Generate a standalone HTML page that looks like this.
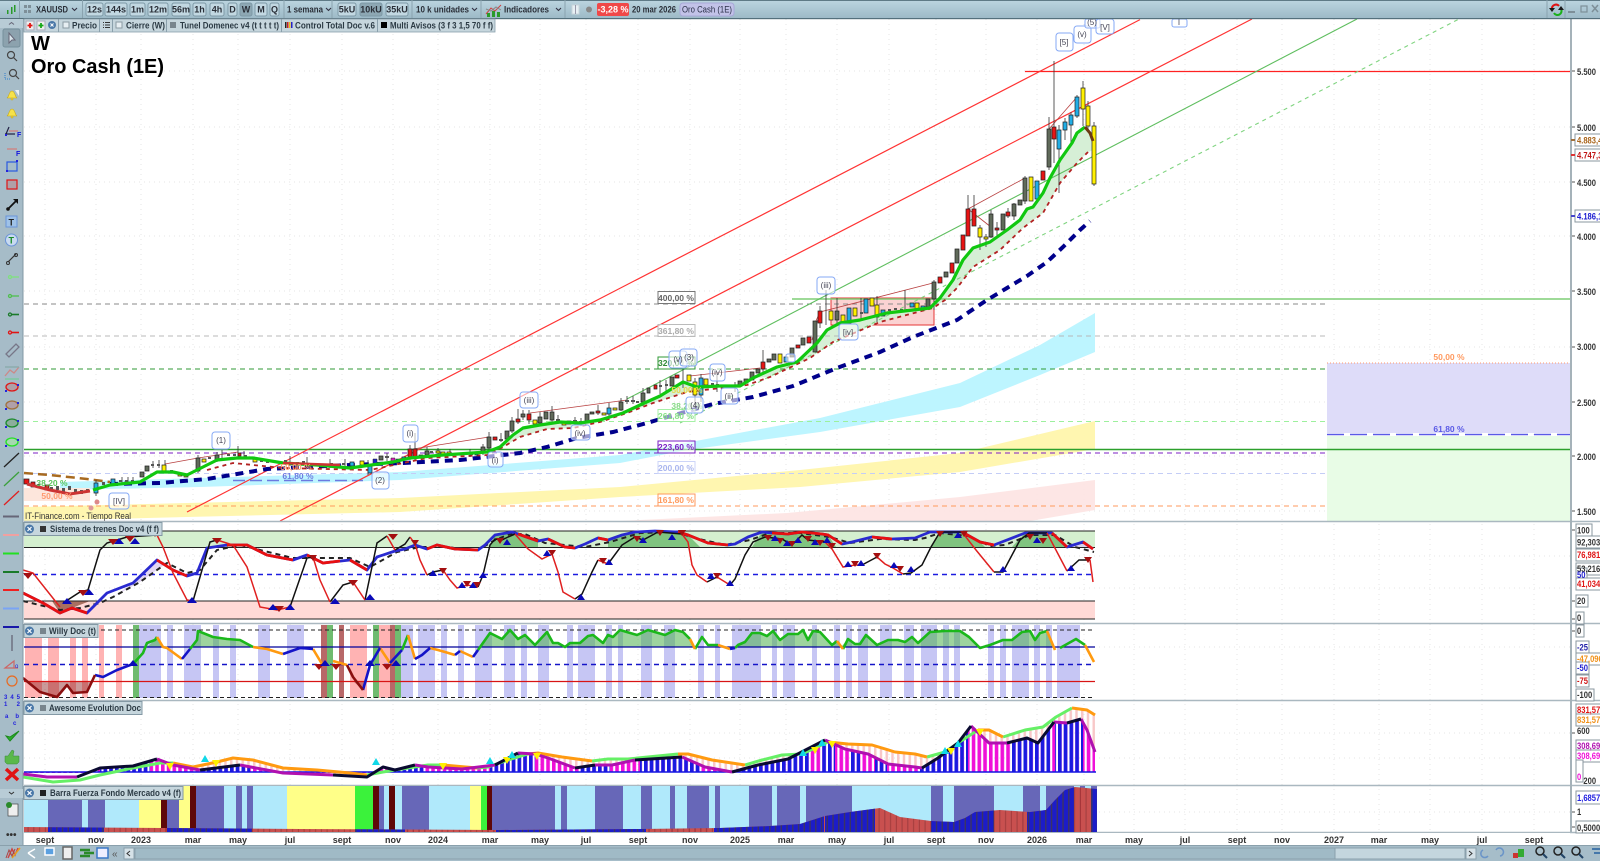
<!DOCTYPE html>
<html lang="es"><head><meta charset="utf-8"><title>XAUUSD Oro Cash</title>
<style>
html,body{margin:0;padding:0;width:1600px;height:861px;overflow:hidden;background:#fff}
svg{display:block}
text{font-family:"Liberation Sans",sans-serif}
.t{font-size:9px;font-weight:bold;fill:#2b3a44}
.l{font-size:9px;font-weight:bold;fill:#2a2f38}
.d{font-size:9px;font-weight:bold;fill:#333;text-anchor:middle}
.p{font-size:8.5px;font-weight:bold;text-anchor:middle}
.a{font-size:9.5px;font-weight:bold;fill:#333}
</style></head><body>
<svg width="1600" height="861" viewBox="0 0 1600 861" xmlns="http://www.w3.org/2000/svg">
<defs>
<linearGradient id="tb" x1="0" y1="0" x2="0" y2="1"><stop offset="0" stop-color="#bcd5e0"/><stop offset="1" stop-color="#9dbac7"/></linearGradient>
<pattern id="sb" patternUnits="userSpaceOnUse" width="5.75" height="10"><rect width="3.6" height="10" fill="#1a1ae0"/></pattern>
<pattern id="sm" patternUnits="userSpaceOnUse" width="5.75" height="10"><rect width="3.6" height="10" fill="#f010d8"/></pattern>
<pattern id="sp" patternUnits="userSpaceOnUse" width="5.75" height="10"><rect width="2.5" height="10" fill="#f8c8c8"/></pattern>
<pattern id="sr" patternUnits="userSpaceOnUse" width="5.75" height="10"><rect width="4.4" height="10" fill="#c9504f"/><rect x="4.4" width="1.3" height="10" fill="#a33"/></pattern>
<pattern id="sd" patternUnits="userSpaceOnUse" width="5.75" height="10"><rect width="4.4" height="10" fill="#1c1cc8"/><rect x="4.4" width="1.3" height="10" fill="#336"/></pattern>
<clipPath id="aw"><polygon points="24,772 24,774 47,777 77,777 100,768 133,766 157,759 173,765 200,770 240,765 283,773 333,775 367,777 383,767 395,770 415,765 428,767 462,769 495,765 518,753 535,754 548,758 575,768 595,765 612,765 635,760 682,757 705,767 732,772 758,765 788,759 825,740 845,749 868,754 888,764 915,767 922,768 938,758 958,743 971,726 989,743 1007,743 1027,738 1038,743 1054,722 1067,723 1081,719 1087,730 1095,752 1095,772"/></clipPath>
<clipPath id="awp"><polygon points="173,763 193,767 217,762 233,758 253,760 283,768 350,773 367,775 383,772 395,770 428,765 443,765 477,768 488,767 508,760 528,754 538,753 562,757 592,761 608,759 628,759 678,754 688,754 712,760 745,765 762,760 782,755 802,754 828,742 848,744 872,745 895,752 915,754 927,757 945,752 958,743 978,730 989,730 1003,737 1025,730 1043,727 1056,717 1072,708 1087,710 1095,715 1095,752 1087,730 1081,719 1067,723 1054,722 1038,743 1027,738 1007,743 989,743 971,726 958,743 938,758 922,768 915,767 888,764 868,754 845,749 825,740 788,759 758,765 732,772 705,767 682,757 635,760 612,765 595,765 575,768 548,758 535,754 518,753 495,765 462,769 428,767 415,765 395,770 383,767 367,777 333,775 283,773 240,765 200,770 173,765"/></clipPath>
<clipPath id="bb"><polygon points="24,827 300,829 500,830 640,829 720,828 770,826 800,824 825,816 850,812 880,808 900,817 931,821 954,822 965,818 975,812 1000,810 1030,812 1046,810 1055,800 1065,790 1075,787 1097,789 1097,832 24,832"/></clipPath>
</defs>

<rect width="1600" height="861" fill="#fff"/>

<!-- grid -->
<path fill="none" stroke="#e4e4e4" stroke-dasharray="1 4" d="M24 71H1570M24 127H1570M24 182H1570M24 236H1570M24 291H1570M24 347H1570M24 402H1570M24 456H1570M24 511H1570M24 556H1570M24 588H1570M24 647H1570M24 733H1570M24 758H1570M24 812H1570M45 19V832M96 19V832M141 19V832M193 19V832M238 19V832M290 19V832M342 19V832M393 19V832M438 19V832M490 19V832M540 19V832M586 19V832M638 19V832M690 19V832M740 19V832M786 19V832M837 19V832M889 19V832M936 19V832M986 19V832M1037 19V832M1084 19V832M1134 19V832M1185 19V832M1237 19V832M1282 19V832M1334 19V832M1379 19V832M1430 19V832M1482 19V832M1534 19V832"/>

<!-- price panel bands -->
<polygon fill="#fde3e2" opacity=".9" points="620,521 787,513 960,497 1095,480 1095,510 1030,521"/>
<polygon fill="#fff6b0" points="24,507 187,503 400,498 620,487 800,470 960,453 1095,421 1095,449 960,472 800,487 620,497 400,512 187,517 24,521"/>
<polygon fill="#bdf5ff" points="60,482 200,478 400,472 620,455 820,418 960,383 1040,345 1095,313 1095,352 1040,375 960,407 820,432 687,450 620,463 400,480 200,487 60,490"/>
<rect x="24" y="488" width="66" height="13" fill="#fde6dc"/>
<rect x="1327" y="363" width="243" height="70" fill="#dedcf9"/>
<rect x="1327" y="436" width="243" height="85" fill="#e8fce6"/>
<rect x="831" y="298" width="103" height="27" fill="#fbd2d2" stroke="#e53535"/>
<polygon fill="#d6efd6" points="487,452 500,447 513,435 523,428 540,425 560,422 580,423 600,420 623,413 640,405 660,396 683,382 697,387 720,386 740,386 753,378 750,382 687,392 653,403 627,413 600,422 573,428 547,429 520,437 503,447"/>
<polygon fill="#d6efd6" points="750,378 777,367 797,362 817,343 827,330 840,323 860,320 887,313 913,310 930,308 940,298 953,280 963,260 973,248 990,242 1007,230 1020,220 1027,209 1033,207 1043,193 1050,178 1060,160 1072,143 1077,133 1085,127 1090,133 1094,150 1088,152 1077,163 1060,183 1043,213 1023,228 1000,250 973,267 957,288 945,300 933,308 880,322 833,342 810,358 770,377"/>

<!-- levels -->
<g fill="none" stroke-width="1">
<path d="M24 304H1325" stroke="#8a8a8a" stroke-dasharray="5 4"/>
<path d="M24 336H1325" stroke="#b8b8b8" stroke-dasharray="5 4"/>
<path d="M24 369H1325" stroke="#2f9a35" stroke-dasharray="5 4"/>
<path d="M24 421.500H1325" stroke="#9df09d" stroke-dasharray="5 4"/>
<path d="M24 453H1325" stroke="#7b1fc4" stroke-dasharray="5 4"/>
<path d="M24 473.500H1325" stroke="#c4cdf6" stroke-dasharray="5 4"/>
<path d="M24 506H1325" stroke="#ff9a5c" stroke-dasharray="5 4"/>
<path d="M1327 363H1570" stroke="#ff9a70" stroke-dasharray="1 2"/>
<path d="M1327 434.500H1570" stroke="#5a5ae6" stroke-width="1.500" stroke-dasharray="17 6"/>
<path d="M233 480.500H363" stroke="#6c7ae0" stroke-width="1.500" stroke-dasharray="12 5"/>
<path d="M24 449.500H1570" stroke="#2ca02c" stroke-width="1.500"/>
<path d="M792 299H1570" stroke="#7fce77" stroke-width="1.500"/>
<path d="M1025 71.500H1570" stroke="#f22" stroke-width="1.200"/>
<path d="M187 512L1140 19.600" stroke="#f33" stroke-width="1.200"/>
<path d="M280 521L1252 19" stroke="#f33" stroke-width="1.200"/>
<path d="M627 399L1357 19" stroke="#5fbe5f" stroke-width="1.100"/>
<path d="M680 423L1459 19" stroke="#7fd47f" stroke-width="1.100" stroke-dasharray="4 4"/>
<path d="M815 323L820 312L933 283M690 376L760 368M165 464L198 458L238 452M968 209L991 227M968 209L1025 178M1049 129L1077 97M812 340L820 312M413 449L489 437M530 413L627 400" stroke="#b84040" stroke-width=".8"/>
</g>

<!-- MA lines -->
<polyline fill="none" stroke="#a86a20" stroke-width="2.500" stroke-dasharray="9 5" points="24,473 50,475 87,479 110,482"/>
<polyline fill="none" stroke="#00008b" stroke-width="4" stroke-dasharray="8 6" points="110,484 160,483 207,479 267,469 306,467 350,465 403,463 460,460 520,453 547,447 577,438 613,432 647,423 657,420 713,404 753,397 793,386 837,368 880,352 913,337 957,320 987,300 1007,288 1027,276 1047,262 1063,247 1080,230 1090,221"/>
<polyline fill="none" stroke="#b22222" stroke-width="1.800" stroke-dasharray="4 4" points="207,470 233,463 283,468 370,470 427,458 487,455 503,447 520,437 547,429 573,428 600,422 627,413 653,403 687,392 747,385 770,377 810,358 833,342 880,322 933,308 945,300 957,288 973,267 1000,250 1023,228 1043,213 1060,183 1077,163 1088,152"/>

<!-- candles: wicks -->
<path fill="none" stroke="#333" stroke-width=".8" d="M96 480V496M122 477V484M128 477V484M133 477V484M153 461V468M159 460V468M165 460V472M198 455V473M217 452V462M222 450V460M238 446V458M244 451V459M290 456V466M307 457V467M330 459V468M345 459V468M368 460V475M387 453V461M410 445V460M415 433V460M427 447V457M438 448V455M450 449V456M470 449V457M483 444V455M489 432V450M501 433V442M512 417V433M518 409V424M523 410V420M529 410V424M540 412V426M552 406V422M558 415V424M575 417V425M581 418V426M598 405V415M609 403V416M621 398V411M627 396V404M633 396V404M643 388V406M660 380V394M666 380V394M683 368V388M695 378V410M701 374V402M717 372V392M735 382V392M763 350V372M820 306V328M826 290V325M837 298V325M861 298V320M877 296V322M905 290V312M934 280V310M968 195V236M974 195V226M980 225V250M986 234V247M991 210V238M997 222V236M1008 208V218M1014 203V220M1025 176V204M1049 117V170M1054 61V163M1059 125V193M1065 118V140M1071 112V145M1077 95V118M1083 81V126M1088 101V130M1094 122V186"/>

<!-- candle bodies -->
<path fill="#606a5a" stroke="#222" stroke-width=".7" d="M379 456h4v4h-4zM419 455h4v3h-4zM425 451h4v4h-4zM481 447h4v6h-4zM487 437h4v11h-4zM505 431h4v8h-4zM510 421h4v10h-4zM521 414h4v3h-4zM538 417h4v6h-4zM544 412h4v7h-4zM550 412h4v8h-4zM585 414h4v7h-4zM590 412h4v2h-4zM619 402h4v8h-4zM641 393h4v9h-4zM647 388h3v5h-3zM670 377h4v9h-4zM738 381h4v5h-4zM744 379h4v4h-4zM750 372h4v8h-4zM756 369h4v4h-4zM767 359h4v3h-4zM772 354h4v6h-4zM790 348h4v9h-4zM801 338h4v7h-4zM813 321h4v31h-4zM835 311h4v9h-4zM926 299h4v8h-4zM932 282h4v17h-4zM944 272h4v5h-4zM955 249h4v14h-4zM989 214h4v23h-4zM1001 214h4v16h-4zM1012 204h4v12h-4zM1018 200h4v5h-4zM1023 178h4v23h-4zM1047 129h4v38h-4zM196 458h4v13h-4zM140 472h4v5h-4zM145 466h4v5h-4zM215 455h4v5h-4z"/>
<path fill="#fff000" stroke="#222" stroke-width=".7" d="M162 465h4v7h-4zM178 473h4v3h-4zM184 474h4v3h-4zM202 459h4v3h-4zM253 459h4v3h-4zM436 451h4v2h-4zM441 452h4v2h-4zM447 452h4v2h-4zM533 420h4v4h-4zM562 422h4v3h-4zM602 413h4v2h-4zM613 408h4v2h-4zM687 375h4v6h-4zM693 382h4v13h-4zM704 379h4v6h-4zM778 354h4v9h-4zM829 311h4v9h-4zM841 315h4v8h-4zM853 308h4v8h-4zM870 298h4v8h-4zM875 305h4v12h-4zM915 303h4v7h-4zM978 228h4v9h-4zM984 237h4v2h-4zM1029 177h4v24h-4zM1081 88h4v21h-4zM1086 106h4v20h-4zM1092 126h4v58h-4zM360 461h4v4h-4z"/>
<path fill="#22aee6" stroke="#222" stroke-width=".7" d="M94 483h4v10h-4zM111 479h4v5h-4zM321 464h4v3h-4zM350 462h4v4h-4zM368 465h4v8h-4zM402 457h4v2h-4zM475 453h3v2h-3zM567 421h4v3h-4zM607 408h4v6h-4zM699 378h4v17h-4zM784 357h4v5h-4zM847 308h4v15h-4zM864 299h4v14h-4zM881 310h4v6h-4zM910 303h4v4h-4zM921 306h4v4h-4zM1035 181h4v18h-4zM1057 130h4v19h-4zM1063 122h4v8h-4zM1069 115h4v10h-4zM1075 97h4v19h-4z"/>
<path fill="#1c1cc8" stroke="#222" stroke-width=".5" d="M373 459h4v6h-4zM396 459h4v4h-4z"/>
<path fill="#d820b8" stroke="#222" stroke-width=".5" d="M391 458h4v5h-4z"/>
<path fill="#e81414" stroke="#222" stroke-width=".7" d="M24 479h5v5h-5zM31 482h4v5h-4zM45 485h4v5h-4zM238 453h3v3h-3zM408 449h4v8h-4zM413 449h4v8h-4zM493 437h4v3h-4zM516 419h4v3h-4zM527 414h4v6h-4zM596 411h4v2h-4zM654 385h3v4h-3zM675 375h4v3h-4zM761 362h4v7h-4zM796 345h4v3h-4zM807 337h4v6h-4zM818 311h4v12h-4zM938 277h4v6h-4zM950 263h4v10h-4zM961 235h4v15h-4zM966 209h4v27h-4zM972 209h4v17h-4zM995 228h4v2h-4zM1006 212h4v4h-4zM1041 171h4v9h-4zM1052 127h4v12h-4z"/>
<path fill="#555" d="M37 484h3v4h-3zM50 487h3v4h-3zM56 486h3v4h-3zM62 488h3v4h-3zM68 486h3v4h-3zM74 489h3v4h-3zM80 490h3v4h-3zM86 489h3v3h-3zM102 482h3v3h-3zM119 480h3v2h-3zM125 480h3v2h-3zM131 480h3v2h-3zM151 464h3v2h-3zM157 464h3v2h-3zM170 470h3v2h-3zM208 457h3v2h-3zM227 454h3v2h-3zM233 454h3v2h-3zM244 455h3v2h-3zM260 460h3v2h-3zM266 461h3v2h-3zM272 460h3v2h-3zM278 461h3v2h-3zM284 460h3v2h-3zM296 462h3v2h-3zM302 461h3v2h-3zM312 463h3v2h-3zM330 463h3v2h-3zM336 464h3v2h-3zM342 463h3v2h-3zM385 456h4v2h-4zM430 451h3v2h-3zM453 453h3v2h-3zM458 453h3v2h-3zM464 453h3v2h-3zM470 453h3v2h-3zM499 439h4v2h-4zM556 419h4v2h-4zM573 420h4v2h-4zM579 421h4v2h-4zM625 400h4v2h-4zM631 400h4v2h-4zM636 401h3v2h-3zM659 385h3v2h-3zM665 384h3v2h-3zM711 383h3v2h-3zM716 384h3v2h-3zM722 385h3v2h-3zM728 385h3v2h-3zM734 385h3v2h-3zM860 312h3v2h-3zM888 309h3v2h-3zM894 308h3v2h-3zM900 309h3v2h-3zM906 309h3v2h-3z"/>

<polyline fill="none" stroke="#10c810" stroke-width="3.200" stroke-linejoin="round" points="93,490 110,485 140,482 157,472 173,472 187,475 197,470 217,460 237,458 253,458 283,463 317,465 350,468 393,462 410,458 443,455 487,452 500,447 513,435 523,428 540,425 560,422 580,423 600,420 623,413 640,405 660,396 683,382 697,387 720,386 740,386 753,378 777,367 797,362 817,343 827,330 840,323 860,320 887,313 913,310 930,308 940,298 953,280 963,260 973,248 990,242 1007,230 1020,220 1027,209 1033,207 1043,193 1050,178 1060,160 1072,143 1077,133 1085,127"/>
<polyline fill="none" stroke="#6b3a12" stroke-width="3" points="1085,127 1090,133 1093,141"/>
<polyline fill="none" stroke="#c33" stroke-width="3" points="27,484 50,490 70,494 90,491"/>
<polyline fill="none" stroke="#c33" stroke-width="2.500" points="283,463 310,464 340,465"/>

<!-- pct labels -->
<g fill="#fff" fill-opacity=".55">
<rect x="658" y="291.500" width="37" height="12" stroke="#777"/>
<rect x="658" y="324.500" width="37" height="12" stroke="#bbb"/>
<rect x="658" y="357" width="37" height="12" stroke="#2f9a35"/>
<rect x="658" y="409.500" width="37" height="12" stroke="#a6f0a6"/>
<rect x="658" y="441" width="37" height="12" stroke="#7b1fc4"/>
<rect x="658" y="461.500" width="37" height="12" stroke="#cdd5f8"/>
<rect x="658" y="494" width="37" height="12" stroke="#ff9a5c"/>
</g>
<text class="p" x="676" y="301" fill="#666">400,00 %</text>
<text class="p" x="676" y="334" fill="#aaa">361,80 %</text>
<text class="p" x="676" y="366" fill="#2f8a35">320,00 %</text>
<text class="p" x="676" y="419" fill="#85e085">261,80 %</text>
<text class="p" x="676" y="450" fill="#7b1fc4">223,60 %</text>
<text class="p" x="676" y="471" fill="#aab6ee">200,00 %</text>
<text class="p" x="676" y="503" fill="#ff9a5c">161,80 %</text>
<text class="p" x="687" y="409" fill="#86d986">38,20 %</text>
<text class="p" x="687" y="393" fill="#e8d94a">50,00 %</text>
<text class="p" x="1449" y="360" fill="#ff9a60">50,00 %</text>
<text class="p" x="1449" y="432" fill="#5a5ae6">61,80 %</text>
<text class="p" x="298" y="479" fill="#6c7ae0">61,80 %</text>
<text class="p" x="296" y="470" fill="#ffa070">50,00 %</text>
<text class="p" x="52" y="486" fill="#5cc45c">38,20 %</text>
<text class="p" x="57" y="499" fill="#ff9a70">50,00 %</text>

<!-- elliott labels -->
<g fill="#fff" fill-opacity=".6" stroke="#86a9f5">
<rect x="1056" y="33" width="17" height="18" rx="3"/><rect x="1074" y="26" width="17" height="17" rx="3"/><rect x="1085" y="19" width="15" height="9" rx="2"/><rect x="1096" y="19" width="18" height="15" rx="3"/><rect x="1172" y="19" width="15" height="8" rx="2"/>
<rect x="212" y="432" width="18" height="17" rx="3"/><rect x="403" y="425" width="15" height="17" rx="3"/><rect x="520" y="392" width="18" height="16" rx="3"/><rect x="817" y="277" width="18" height="17" rx="3"/><rect x="372" y="472" width="17" height="17" rx="3"/><rect x="109" y="493" width="20" height="16" rx="3"/><rect x="571" y="425" width="19" height="15" rx="3"/><rect x="669" y="351" width="18" height="17" rx="3"/><rect x="680" y="349" width="17" height="17" rx="3"/><rect x="710" y="364" width="15" height="17" rx="3"/><rect x="686" y="397" width="17" height="16" rx="3"/><rect x="721" y="388" width="17" height="16" rx="3"/><rect x="786" y="354" width="9" height="8" rx="2"/><rect x="839" y="324" width="19" height="16" rx="3"/><rect x="488" y="452" width="15" height="15" rx="3"/>
</g>
<g text-anchor="middle" font-size="8" fill="#445">
<text x="1064" y="45">[5]</text><text x="1082" y="37">(v)</text><text x="1092" y="25">(5)</text><text x="1105" y="30">[V]</text><text x="1179" y="25">I</text>
<text x="221" y="443">(1)</text><text x="410" y="436">(i)</text><text x="529" y="403">(iii)</text><text x="826" y="288">(iii)</text><text x="380" y="483">(2)</text><text x="119" y="504">[IV]</text><text x="580" y="436">(iv)</text><text x="678" y="362">(v)</text><text x="689" y="360">(3)</text><text x="717" y="375">(iv)</text><text x="695" y="408">(4)</text><text x="729" y="399">(ii)</text><text x="848" y="335">[iv]</text><text x="495" y="463">(i)</text>
</g>
<text x="25" y="519" font-size="9" fill="#333" textLength="106" lengthAdjust="spacingAndGlyphs">IT-Finance.com - Tiempo Real</text>
<circle cx="97" cy="502" r="2.500" fill="#d88"/><circle cx="91" cy="508" r="2.500" fill="#d99"/>

<text x="31" y="50" font-size="20" font-weight="bold" fill="#000">W</text>
<text x="31" y="73" font-size="20" font-weight="bold" fill="#000" textLength="133" lengthAdjust="spacingAndGlyphs">Oro Cash (1E)</text>

<!-- separators -->
<path d="M24 521.500H1600M24 623.500H1600M24 700.500H1600M24 785.500H1600M24 832.500H1600" stroke="#aab8c0" stroke-width="1.500"/>

<!-- TRENES -->
<rect x="24" y="531" width="1071" height="17" fill="#d4efcf"/>
<rect x="24" y="601" width="1071" height="18" fill="#ffd9d6"/>
<g fill="#80c480">
<polygon points="490,547 495,535 512,532 518,534 538,541 538,547"/>
<polygon points="608,547 608,540 622,535 635,532 655,531 678,532 688,535 700,547"/>
<polygon points="752,547 762,532 772,533 788,534 802,532 822,534 828,535 836,547"/>
<polygon points="931,547 940,532 962,532 980,542 985,547"/>
<polygon points="1012,547 1025,533 1052,533 1065,547"/>
</g>
<polygon fill="#a87060" points="52,601 90,601 72,608 60,613"/>
<polygon fill="#dccdf0" opacity=".8" points="113,597 133,583 157,560 167,563 140,582"/>
<polygon fill="#dccdf0" opacity=".8" points="1067,547 1083,542 1093,549 1075,547"/>
<path fill="none" stroke="#222" d="M24 531H1095M24 547.500H1095M24 601H1095M24 619H1095"/>
<path fill="none" stroke="#1c1ce0" stroke-width="1.500" stroke-dasharray="5 4" d="M24 574.500H1095"/>
<polyline fill="none" stroke="#222" stroke-width="2" stroke-dasharray="5 4" points="23,601 60,610 80,608 100,603 113,597 140,582 167,563 187,573 200,570 217,550 240,545 260,550 293,558 350,558 370,567 397,552 420,547 445,547 478,550 495,540 510,534 525,534 545,543 565,545 585,547 610,542 640,533 675,532 695,538 725,545 750,540 770,533 800,533 830,537 850,543 880,539 915,540 925,538 940,533 968,536 990,546 1005,545 1030,535 1055,535 1075,547 1094,552"/>
<polyline fill="none" stroke="#2a2ad0" stroke-width="2.800" stroke-linejoin="round" points="23,593 43,603 60,613 72,608 87,613 107,593 133,583 157,560 173,570 187,576 197,573 207,548 227,545 247,545 267,555 293,560 307,555 323,563 350,560 367,570 377,557 395,551 405,549 415,545 427,549 437,545 455,549 478,550 485,545 495,535 512,532 518,534 538,541 548,539 565,547 575,548 585,544 598,538 608,540 622,535 635,532 655,531 678,532 688,535 708,543 728,545 735,544 748,537 762,532 772,533 788,534 802,532 822,534 828,535 842,544 852,542 872,537 892,539 915,538 930,532 962,532 980,542 994,545 1025,533 1052,533 1067,547 1083,542 1093,549"/>
<g fill="none" stroke="#e81010" stroke-width="2.800">
<polyline points="23,593 43,603 60,613 72,608 87,613"/><polyline points="157,560 173,570 187,576"/><polyline points="227,545 247,545 267,555 293,560"/><polyline points="307,555 323,563 340,561"/><polyline points="350,560 367,570"/><polyline points="427,549 437,545 455,549 478,550"/><polyline points="518,534 538,541"/><polyline points="548,539 565,547 575,548"/><polyline points="598,538 608,540"/><polyline points="678,532 688,535 708,543 728,545"/><polyline points="772,533 788,534 802,532 822,534 828,535 842,544"/><polyline points="872,537 892,539"/><polyline points="962,532 980,542 994,545"/><polyline points="1052,533 1067,547"/><polyline points="1083,542 1093,549"/>
</g>
<g fill="none" stroke="#111" stroke-width="1.500">
<polyline points="63,603 80,592 88,590 100,550 107,543 127,537 157,535"/>
<polyline points="193,601 200,577 210,542 217,540"/>
<polyline points="290,607 307,558 313,557"/>
<polyline points="330,602 343,585 353,582"/>
<polyline points="365,600 377,543 387,536"/>
<polyline points="395,550 405,544 410,537"/>
<polyline points="427,575 433,572 443,570"/>
<polyline points="478,587 483,575 490,545 495,539 502,540 508,537 515,534"/>
<polyline points="575,599 582,594 592,572 598,560"/>
<polyline points="608,564 622,545 635,537 643,540 658,532 682,534"/>
<polyline points="707,582 717,577"/>
<polyline points="730,585 735,579 745,555 753,542 765,537 782,539 792,545 802,535 808,540 825,542"/>
<polyline points="862,565 877,557"/>
<polyline points="903,574 911,573 922,565 931,547 940,532 962,532"/>
<polyline points="994,572 1003,572 1020,540 1029,533 1047,533"/>
<polyline points="1067,571 1079,560 1090,560"/>
</g>
<g fill="none" stroke="#e02020" stroke-width="1.500">
<polyline points="23,570 33,573 60,607"/><polyline points="157,535 163,547 173,573 187,600 193,601"/><polyline points="217,540 233,545 247,567 260,607 277,610 290,607"/><polyline points="313,557 320,580 330,602"/><polyline points="353,582 365,600"/><polyline points="387,536 395,550"/><polyline points="410,537 415,544 420,560 427,575"/><polyline points="443,570 450,580 457,588 467,585 478,587"/><polyline points="515,534 528,549 542,559 552,554 558,572 563,592 575,599"/><polyline points="598,560 608,564"/><polyline points="682,534 688,542 692,565 697,575 707,582"/><polyline points="717,577 730,585"/><polyline points="825,542 832,549 843,567 855,565 862,565"/><polyline points="877,557 885,564 893,568 903,574"/><polyline points="962,532 976,550 994,572"/><polyline points="1047,533 1067,571"/><polyline points="1090,560 1093,582"/>
</g>
<path fill="#a40f10" d="M28 579l-5-6h10zM83 596l-5-6h10zM113 545l-5-6h10zM130 542l-5-6h10zM155 537l-4-6h8zM217 544l-5-6h10zM279 612l-5-6h10zM313 561l-4-6h8zM353 586l-5-6h10zM393 540l-5-6h10zM415 546l-4-6h8zM443 574l-4-6h8zM467 587l-4-6h8zM477 588l-4-6h8zM500 544l-4-6h8zM552 556l-4-6h8zM603 564l-4-6h8zM637 542l-4-6h8zM660 536l-4-6h8zM682 536l-4-6h8zM717 579l-4-6h8zM768 541l-4-6h8zM780 544l-4-6h8zM792 547l-4-6h8zM808 542l-4-6h8zM820 546l-4-6h8zM832 549l-4-6h8zM855 567l-4-6h8zM877 559l-4-6h8zM900 572l-4-6h8zM940 537l-4-6h8zM964 537l-4-6h8zM1030 540l-4-6h8zM1043 544l-4-6h8zM1088 563l-4-6h8z"/>
<path fill="#0a0ab8" d="M67 598l-5 6h10zM89 589l-5 6h10zM119 538l-5 6h10zM135 538l-5 6h10zM192 597l-5 6h10zM273 604l-5 6h10zM290 604l-5 6h10zM335 598l-5 6h10zM370 594l-5 6h10zM433 570l-4 6h8zM462 582l-4 6h8zM473 582l-4 6h8zM483 572l-4 6h8zM507 539l-4 6h8zM547 550l-4 6h8zM581 594l-4 6h8zM609 559l-4 6h8zM643 537l-4 6h8zM672 534l-4 6h8zM711 573l-4 6h8zM730 580l-4 6h8zM775 535l-4 6h8zM787 540l-4 6h8zM798 537l-4 6h8zM815 539l-4 6h8zM827 537l-4 6h8zM848 561l-4 6h8zM861 560l-4 6h8zM894 562l-4 6h8zM911 566l-4 6h8zM958 532l-4 6h8zM1003 566l-4 6h8zM1037 537l-4 6h8zM1071 565l-4 6h8z"/>

<!-- WILLY -->
<g fill="#c6c6f4">
<path d="M139 625h22v73h-22zM167 625h6v73h-6zM184 625h17v73h-17zM213 625h6v73h-6zM230 625h6v73h-6zM258 625h12v73h-12zM287 625h17v73h-17zM401 625h12v73h-12zM418 625h17v73h-17zM441 625h6v73h-6zM458 625h6v73h-6zM475 625h17v73h-17zM504 625h11v73h-11zM521 625h6v73h-6zM538 625h11v73h-11zM567 625h6v73h-6zM578 625h17v73h-17zM606 625h6v73h-6zM618 625h5v73h-5zM641 625h11v73h-11zM664 625h11v73h-11zM698 625h6v73h-6zM715 625h5v73h-5zM732 625h29v73h-29zM772 625h5v73h-5zM783 625h12v73h-12zM812 625h5v73h-5zM834 625h6v73h-6zM846 625h6v73h-6zM858 625h10v73h-10zM880 625h12v73h-12zM904 625h10v73h-10zM921 625h16v73h-16zM943 625h6v73h-6zM954 625h6v73h-6zM988 625h6v73h-6zM1000 625h6v73h-6zM1012 625h17v73h-17zM1034 625h6v73h-6zM1046 625h6v73h-6zM1057 625h23v73h-23z"/>
</g>
<path fill="#ffb3b3" d="M25 625h17v73H25zM48 625h11v73H48zM70 625h6v73h-6zM82 625h6v73h-6zM99 625h5v73h-5zM116 625h6v73h-6zM350 625h17v73h-17zM379 625h11v73h-11z"/>
<path fill="#6fbb6f" d="M133 625h6v73h-6zM327 625h6v73h-6zM373 625h6v73h-6zM395 625h6v73h-6z"/>
<path fill="#b86868" d="M321 625h6v73h-6zM339 625h5v73h-5zM390 625h5v73h-5z"/>
<polygon fill="#4fb04f" opacity=".55" points="147,647 155,640 157,637 163,647 190,647 197,640 198,631 213,637 227,639 240,640 253,647 480,647 490,633 502,639 510,630 518,639 525,635 535,645 547,632 553,643 558,643 565,647 570,643 580,643 588,636 593,635 603,643 608,635 613,637 620,630 637,635 648,630 665,635 675,630 683,632 690,639 694,647 738,647 745,642 752,633 760,633 767,636 773,631 780,640 788,634 798,634 803,630 808,640 813,631 820,632 832,645 837,641 841,647 848,639 855,644 860,644 866,635 877,645 888,640 898,640 905,642 912,637 918,643 930,632 945,631 960,631 969,637 978,647 1003,647 1003,640 1012,640 1022,632 1030,631 1035,640 1040,633 1047,631 1053,647"/>
<polygon fill="#8a2020" opacity=".45" points="24,678 40,692 57,697 67,685 73,693 87,692 92,681 24,681"/>
<polygon fill="#8a2020" opacity=".45" points="353,681 363,690 367,681"/>
<path fill="none" stroke="#222" stroke-dasharray="4 3" d="M24 630H1095M24 697.500H1095"/>
<path fill="none" stroke="#00009a" stroke-width="1.300" d="M24 647H1095"/>
<path fill="none" stroke="#1414c8" stroke-width="1.500" stroke-dasharray="5 4" d="M24 664.500H1095"/>
<path fill="none" stroke="#d81414" stroke-width="1.300" d="M24 681.500H1095"/>
<g fill="none" stroke-width="2.600" stroke-linejoin="round">
<g stroke="#1bb81b">
<polyline points="478,650 490,633 502,639 510,630 518,639 525,635 535,645 547,632 553,643 558,643 565,647 570,643 580,643 588,636 593,635 603,643 608,635 613,637 620,630 637,635 648,630 665,635 675,630 683,632 690,639"/>
<polyline points="695,649 702,637 708,645 718,645"/>
<polyline points="735,648 738,645 745,642 752,633 760,633 767,636 773,631 780,640 788,634 798,634 803,630 808,640 813,631 820,632 832,645 837,641"/>
<polyline points="843,649 848,639 855,644 860,644 866,635 877,645 888,640 898,640 905,642 912,637 918,643 930,632 945,631 960,631 969,637 980,648 990,645 1003,640 1012,640 1022,632 1030,631 1035,640 1040,633 1047,631"/>
<polyline points="402,650 408,635"/>
<polyline points="133,664 143,653 147,643 155,640 157,637"/>
<polyline points="190,649 197,640 198,631 213,637 227,639 240,640 253,647"/>
<polyline points="1060,648 1076,639 1085,645"/>
</g>
<g stroke="#ff9a10">
<polyline points="157,637 163,647 167,648 182,659"/>
<polyline points="253,647 267,649 283,654"/>
<polyline points="313,649 322,664"/><polyline points="333,661 347,665"/>
<polyline points="380,648 390,663"/>
<polyline points="408,635 415,659"/>
<polyline points="430,648 438,650 445,652 455,655"/>
<polyline points="460,651 473,657"/>
<polyline points="690,639 695,649"/>
<polyline points="718,645 730,649"/>
<polyline points="837,641 843,649"/>
<polyline points="1047,631 1055,650"/>
<polyline points="1085,645 1094,662"/>
</g>
<g stroke="#1414c8">
<polyline points="95,675 103,677 117,670 133,664"/>
<polyline points="182,659 190,649"/>
<polyline points="283,654 300,648 313,649"/>
<polyline points="363,690 370,665 380,648"/>
<polyline points="390,663 402,650"/>
<polyline points="415,659 422,655 430,648"/>
<polyline points="455,655 460,651"/>
<polyline points="473,657 478,650"/>
<polyline points="730,649 735,648"/>
</g>
<g stroke="#8b0f0f">
<polyline points="23,678 40,692 57,697 67,685 73,693 87,692 95,675"/>
<polyline points="347,665 353,677 363,690"/>
</g>
</g>
<path fill="#a40f10" d="M319 670l-5-6h10zM336 670l-5-6h10zM387 670l-5-6h10z"/>
<path fill="#0a0ab8" d="M325 660l-5 6h10zM133 660l-5 6h10zM370 660l-5 6h10zM396 660l-5 6h10z"/>

<!-- AWESOME -->
<g clip-path="url(#awp)"><rect x="24" y="701" width="1072" height="80" fill="url(#sp)"/></g>
<g clip-path="url(#aw)">
<rect x="24" y="701" width="1072" height="72" fill="url(#sm)"/>
<rect x="100" y="701" width="50" height="72" fill="url(#sb)"/><rect x="200" y="701" width="50" height="72" fill="url(#sb)"/><rect x="395" y="701" width="30" height="72" fill="url(#sb)"/><rect x="490" y="701" width="45" height="72" fill="url(#sb)"/><rect x="580" y="701" width="30" height="72" fill="url(#sb)"/><rect x="640" y="701" width="60" height="72" fill="url(#sb)"/><rect x="735" y="701" width="75" height="72" fill="url(#sb)"/><rect x="822" y="701" width="13" height="72" fill="url(#sb)"/><rect x="850" y="701" width="10" height="72" fill="url(#sb)"/><rect x="875" y="701" width="12" height="72" fill="url(#sb)"/><rect x="920" y="701" width="48" height="72" fill="url(#sb)"/><rect x="1010" y="701" width="40" height="72" fill="url(#sb)"/><rect x="1055" y="701" width="28" height="72" fill="url(#sb)"/>
</g>
<path d="M24 772H1096" stroke="#1414e0" stroke-width="1.500"/>
<g fill="none" stroke-width="3" stroke-linejoin="round">
<g stroke="#66f066">
<polyline points="23,777 53,782 80,780 100,775 133,768 160,763 173,763"/>
<polyline points="367,775 383,772 395,770 428,765 443,765"/>
<polyline points="477,768 488,767 508,760 528,754"/>
<polyline points="592,761 608,759 628,759 678,754"/>
<polyline points="745,765 762,760 782,755 802,754 828,742"/>
<polyline points="927,757 945,752 958,743 978,730"/>
<polyline points="1003,737 1025,730 1043,727 1056,717 1072,708"/>
</g>
<g stroke="#ff9a10">
<polyline points="173,763 193,767 217,762 233,758 253,760 283,768 317,770 350,773 367,775"/>
<polyline points="443,765 477,768"/>
<polyline points="528,754 538,753 562,757 592,761"/>
<polyline points="678,754 688,754 712,760 745,765"/>
<polyline points="828,742 848,744 872,745 895,752 915,754 927,757"/>
<polyline points="978,730 989,730 1003,737"/>
<polyline points="1072,708 1087,710 1095,715"/>
</g>
<g stroke="#b010b0">
<polyline points="23,774 47,777 77,777"/>
<polyline points="157,759 173,765 200,770"/>
<polyline points="240,765 283,773 333,775"/>
<polyline points="415,765 428,767 462,769 495,765"/>
<polyline points="518,753 535,754 548,758 575,768"/>
<polyline points="595,765 612,765 635,760"/>
<polyline points="682,757 705,767 732,772"/>
<polyline points="825,740 845,749 868,754 888,764 915,767 922,768"/>
<polyline points="971,726 989,743 1007,743"/>
<polyline points="1054,722 1067,723"/>
<polyline points="1081,719 1087,730 1095,752"/>
</g>
<g stroke="#0a0a30">
<polyline points="77,777 100,768 133,766 157,759"/>
<polyline points="200,770 240,765"/>
<polyline points="333,775 367,777 383,767 395,770 415,765"/>
<polyline points="495,765 518,753"/>
<polyline points="575,768 595,765"/>
<polyline points="635,760 682,757"/>
<polyline points="732,772 758,765 788,759 825,740"/>
<polyline points="922,768 938,758 958,743 971,726"/>
<polyline points="1007,743 1027,738 1038,743 1054,722"/>
<polyline points="1067,723 1081,719"/>
</g>
</g>
<path fill="#fff000" d="M170 770l-4-7h8zM216 767l-4-7h8zM443 770l-4-7h8zM507 764l-4-7h8zM537 760l-4-7h8zM815 754l-4-7h8zM832 748l-4-7h8zM951 755l-4-7h8zM980 736l-4-7h8z"/>
<path fill="#10d8e8" d="M205 755l-4 7h8zM376 758l-4 7h8zM490 757l-4 7h8zM512 751l-4 7h8zM803 749l-4 7h8zM822 739l-4 7h8zM945 747l-4 7h8zM958 740l-4 7h8z"/>

<!-- BARRA -->
<rect x="24" y="786" width="1073" height="46" fill="#b0e9fb"/>
<g fill="#6767b8"><path d="M48 786h34v46H48zM88 786h17v46H88zM167 786h12v46h-12zM196 786h28v46h-28zM236 786h6v46h-6zM247 786h6v46h-6zM379 786h5v46h-5zM402 786h27v46h-27zM492 786h63v46h-63zM561 786h6v46h-6zM595 786h28v46h-28zM641 786h11v46h-11zM670 786h5v46h-5zM687 786h22v46h-22zM715 786h5v46h-5zM749 786h23v46h-23zM777 786h23v46h-23zM806 786h46v46h-46zM931 786h12v46h-12zM954 786h40v46h-40zM1023 786h17v46h-17zM1046 786h28v46h-28zM1080 786h5v46h-5zM1091 786h6v46h-6z"/></g>
<path fill="#ffff88" d="M139 786h22v46h-22zM179 786h11v46h-11zM287 786h68v46h-68zM470 786h11v46h-11z"/>
<path fill="#3bf23b" d="M355 786h18v46h-18zM481 786h6v46h-6z"/>
<path fill="#5e0808" d="M161 786h6v46h-6zM190 786h6v46h-6zM373 786h6v46h-6zM389 786h6v46h-6zM487 786h5v46h-5z"/>
<g clip-path="url(#bb)">
<rect x="24" y="786" width="1073" height="46" fill="url(#sr)"/>
<rect x="48" y="786" width="56" height="46" fill="url(#sd)"/><rect x="167" y="786" width="30" height="46" fill="url(#sd)"/><rect x="196" y="786" width="56" height="46" fill="url(#sd)"/><rect x="355" y="786" width="50" height="46" fill="url(#sd)"/><rect x="496" y="786" width="150" height="46" fill="url(#sd)"/><rect x="714" y="786" width="110" height="46" fill="url(#sd)"/><rect x="825" y="786" width="50" height="46" fill="url(#sd)"/><rect x="931" y="786" width="23" height="46" fill="url(#sd)"/><rect x="954" y="786" width="40" height="46" fill="url(#sd)"/><rect x="1027" y="786" width="47" height="46" fill="url(#sd)"/><rect x="1091" y="786" width="6" height="46" fill="url(#sd)"/>
</g>

<!-- panel tags -->
<g fill="#c6d6dd" stroke="#8499a5">
<rect x="24" y="522.500" width="138" height="13"/><rect x="24" y="624.500" width="74" height="13"/><rect x="24" y="701.500" width="118" height="13"/><rect x="24" y="786.500" width="159" height="13"/>
</g>
<g>
<circle cx="29.500" cy="529" r="4.500" fill="#4a78a8"/><circle cx="29.500" cy="631" r="4.500" fill="#4a78a8"/><circle cx="29.500" cy="708" r="4.500" fill="#4a78a8"/><circle cx="29.500" cy="793" r="4.500" fill="#4a78a8"/>
<path stroke="#fff" stroke-width="1.200" d="M27.500 527l4 4M31.500 527l-4 4M27.500 629l4 4M31.500 629l-4 4M27.500 706l4 4M31.500 706l-4 4M27.500 791l4 4M31.500 791l-4 4"/>
<rect x="40" y="526" width="6" height="6" fill="#333"/><rect x="40" y="628" width="6" height="6" fill="#78858d"/><rect x="40" y="705" width="6" height="6" fill="#78858d"/><rect x="40" y="790" width="6" height="6" fill="#222"/>
</g>
<text class="t" x="50" y="532" textLength="109" lengthAdjust="spacingAndGlyphs">Sistema de trenes Doc v4 (f f)</text>
<text class="t" x="49" y="634" textLength="47" lengthAdjust="spacingAndGlyphs">Willy Doc (t)</text>
<text class="t" x="49" y="711" textLength="92" lengthAdjust="spacingAndGlyphs">Awesome Evolution Doc</text>
<text class="t" x="50" y="796" textLength="131" lengthAdjust="spacingAndGlyphs">Barra Fuerza Fondo Mercado v4 (f)</text>

<!-- right axis -->
<rect x="1570" y="19" width="2" height="813" fill="#a5b2b9"/>
<path stroke="#555" d="M1572 71h3M1572 127h3M1572 182h3M1572 236h3M1572 291h3M1572 347h3M1572 402h3M1572 456h3M1572 511h3M1572 530h3M1572 601h3M1572 619h3M1572 631h3M1572 733h3M1572 812h3M1572 827h3"/>
<g fill="#fff" stroke="#8a979f">
<rect x="1575" y="134" width="30" height="12"/><rect x="1575" y="149" width="30" height="12"/><rect x="1575" y="210" width="30" height="12"/>
<rect x="1576" y="524" width="16" height="12"/><rect x="1576" y="536" width="30" height="12"/><rect x="1576" y="549" width="30" height="12"/><rect x="1576" y="563" width="30" height="12"/><rect x="1576" y="568" width="11" height="12"/><rect x="1576" y="578" width="30" height="12"/><rect x="1576" y="595" width="12" height="12"/><rect x="1576" y="612" width="8" height="12"/>
<rect x="1576" y="625" width="8" height="12"/><rect x="1576" y="641" width="13" height="12"/><rect x="1576" y="653" width="30" height="12"/><rect x="1576" y="662" width="13" height="12"/><rect x="1576" y="675" width="13" height="12"/><rect x="1576" y="689" width="18" height="12"/>
<rect x="1576" y="704" width="30" height="12"/><rect x="1576" y="714" width="30" height="12"/><rect x="1576" y="740" width="30" height="12"/><rect x="1576" y="750" width="30" height="12"/><rect x="1576" y="760" width="7" height="22"/><rect x="1576" y="791" width="30" height="13"/><rect x="1576" y="821" width="30" height="12"/>
</g>
<path stroke-width="2" d="M1571 140h4" stroke="#a0703c"/><path stroke-width="2" d="M1571 155h4" stroke="#d33"/><path stroke-width="2" d="M1571 216h4" stroke="#44c"/>
<g class="a" transform="translate(1577 0) scale(.8 1)">
<text x="0" y="75">5.500</text><text x="0" y="131">5.000</text><text x="0" y="186">4.500</text><text x="0" y="240">4.000</text><text x="0" y="295">3.500</text><text x="0" y="350">3.000</text><text x="0" y="406">2.500</text><text x="0" y="460">2.000</text><text x="0" y="515">1.500</text>
<text x="0" y="143.500" fill="#a8641a">4.883,4</text><text x="0" y="158.500" fill="#c01414">4.747,3</text><text x="0" y="219.500" fill="#1a1ad0">4.186,1</text>
<text x="0" y="533.500">100</text><text x="0" y="545.500">92,303</text><text x="0" y="558" fill="#e01414">76,981</text><text x="0" y="572">53,216</text><text x="0" y="578" fill="#2222d0">50</text><text x="0" y="587" fill="#e01414">41,034</text><text x="0" y="604">20</text><text x="0" y="621">0</text>
<text x="0" y="634">0</text><text x="0" y="650.500" fill="#2222a8">-25</text><text x="0" y="662" fill="#f09018">-47,096</text><text x="0" y="671" fill="#2222d0">-50</text><text x="0" y="684" fill="#d01414">-75</text><text x="0" y="698">-100</text>
<text x="0" y="713" fill="#e01414">831,57</text><text x="0" y="723" fill="#f09018">831,57</text><text x="0" y="734">600</text><text x="0" y="749" fill="#b010b0">308,69</text><text x="0" y="759" fill="#f010d8">308,69</text><text x="0" y="780" fill="#f010d8">0</text><text x="8" y="784">200</text>
<text x="0" y="801" fill="#2222e0">1,6857</text><text x="0" y="815">1</text><text x="0" y="831">0,5000</text>
</g>

<!-- date axis -->
<rect x="24" y="833" width="1546" height="12" fill="#fff"/>
<g class="d">
<text x="45" y="843">sept</text><text x="96" y="843">nov</text><text x="141" y="843">2023</text><text x="193" y="843">mar</text><text x="238" y="843">may</text><text x="290" y="843">jul</text><text x="342" y="843">sept</text><text x="393" y="843">nov</text><text x="438" y="843">2024</text><text x="490" y="843">mar</text><text x="540" y="843">may</text><text x="586" y="843">jul</text><text x="638" y="843">sept</text><text x="690" y="843">nov</text><text x="740" y="843">2025</text><text x="786" y="843">mar</text><text x="837" y="843">may</text><text x="889" y="843">jul</text><text x="936" y="843">sept</text><text x="986" y="843">nov</text><text x="1037" y="843">2026</text><text x="1084" y="843">mar</text><text x="1134" y="843">may</text><text x="1185" y="843">jul</text><text x="1237" y="843">sept</text><text x="1282" y="843">nov</text><text x="1334" y="843">2027</text><text x="1379" y="843">mar</text><text x="1430" y="843">may</text><text x="1482" y="843">jul</text><text x="1534" y="843">sept</text>
</g>

<!-- bottom bar -->
<rect x="0" y="845" width="1600" height="16" fill="#a6bdc9"/>
<rect x="0" y="845" width="1600" height="1" fill="#8aa0ac"/>
<rect x="135" y="848" width="1330" height="11" fill="#a0bac6" stroke="#8aa0ac"/>
<rect x="1335" y="848" width="130" height="11" fill="#c4d6de" stroke="#8aa0ac"/>
<rect x="124" y="848" width="10" height="11" fill="#d6e2e8" stroke="#8aa0ac"/>
<rect x="1466" y="848" width="10" height="11" fill="#d6e2e8" stroke="#8aa0ac"/>
<path d="M130 851l-3 2.500 3 2.500M1469 851l3 2.500-3 2.500" fill="none" stroke="#333"/>
<text x="112" y="857" font-size="10" fill="#555">«</text>
<g fill="none" stroke-width="1.500">
<path d="M8 858l4-9 3 6 3-7" stroke="#c44"/><path d="M12 858l8-10" stroke="#e8a020"/>
<path d="M28 853l7-4M28 853l7 5" stroke="#fff"/>
<rect x="45" y="848" width="9" height="7" fill="#5aa0e0" stroke="#fff"/>
<rect x="63" y="847" width="9" height="12" fill="#eee" stroke="#666"/>
<path d="M80 850h10M84 853h10M80 856h10" stroke="#2a8a2a" stroke-width="2.500"/>
<rect x="97" y="848" width="11" height="10" fill="#eef" stroke="#3a78c8"/>
<path d="M1483 850a4 4 0 1 0 5 6" stroke="#6a94c8"/><path d="M1500 856a4 4 0 1 0-4-6" stroke="#6a94c8"/>
<rect x="1518" y="849" width="6" height="8" fill="#3a3"/>
<rect x="1513" y="853" width="5" height="5" fill="#c33"/>
<circle cx="1540" cy="851" r="4" stroke="#222"/><path d="M1543 854l4 4" stroke="#246" stroke-width="2"/>
<circle cx="1558" cy="851" r="4" stroke="#222"/><path d="M1561 854l4 4" stroke="#246" stroke-width="2"/>
<circle cx="1576" cy="851" r="4" stroke="#222"/><path d="M1579 854l4 4" stroke="#246" stroke-width="2"/>
<path d="M1592 849h8M1594 853h6" stroke="#47a" stroke-width="2"/>
</g>

<!-- left toolbar -->
<rect x="0" y="19" width="23" height="826" fill="#a6bcc8"/>
<rect x="22.500" y="19" width="1" height="826" fill="#8399a5"/>
<rect x="3" y="29" width="17" height="18" rx="2" fill="#8ca2ae" stroke="#76909c"/>
<path d="M9 33l0 10 3-3 3 0z" fill="#d7e3ea" stroke="#667"/>
<g fill="none" stroke="#444" stroke-width="1.200">
<circle cx="11" cy="55" r="3.500"/><path d="M13.500 57.500l3.500 3.500"/>
<circle cx="13" cy="73" r="3.500"/><path d="M15.500 75.500l3.500 3.500"/>
<path d="M5 73v6h6" stroke="#48c" stroke-dasharray="1 1"/>
</g>
<g fill="#f6e24a" stroke="#c8a818" stroke-width=".6">
<path d="M7 98c2-1 2-7 5-7s3 6 5 7z"/><path d="M7 116c2-1 2-7 5-7s3 6 5 7z"/><circle cx="12" cy="99" r="1"/><circle cx="12" cy="117" r="1"/>
</g>
<path d="M15 90h4v6z" fill="#e8eef2"/>
<path d="M5 134h10M6 134l3-7" stroke="#224" stroke-width="1.200" fill="none"/><path d="M9 131h9" stroke="#c88" stroke-width="1.500"/><text x="17" y="137" font-size="7" font-weight="bold" fill="#11d">F</text>
<path d="M7 149h10" stroke="#c88" stroke-width="1.500"/><text x="16" y="156" font-size="7" font-weight="bold" fill="#11d">F</text>
<rect x="7" y="162" width="10" height="9" fill="none" stroke="#2a5ae0" stroke-width="1.200"/>
<rect x="7" y="180" width="10" height="9" fill="#b0a0a8" stroke="#e01414" stroke-width="1.200"/>
<path d="M8 209l9-9" stroke="#111" stroke-width="1.800"/><path d="M13 199h5v5z" fill="#111"/><circle cx="8" cy="209" r="1.800" fill="#111"/>
<rect x="6" y="216" width="11" height="11" fill="#9fc2e8" stroke="#6a94d8"/><text x="8.500" y="225.500" font-size="9" font-weight="bold" fill="#222">T</text>
<circle cx="11.500" cy="240" r="6" fill="#c8daf0" stroke="#6a94d8"/><text x="8.500" y="243.500" font-size="9" font-weight="bold" fill="#1a8a2a">T</text>
<path d="M8 262l8-8" stroke="#333" stroke-width="1.200"/><circle cx="8" cy="263" r="1.500" fill="none" stroke="#333"/><circle cx="16" cy="255" r="1.500" fill="none" stroke="#333"/>
<g fill="none" stroke-width="1.300">
<path d="M11 277h8" stroke="#7fe07f"/><circle cx="10" cy="277" r="1.500" stroke="#7fe07f"/>
<path d="M11 296h8" stroke="#4fbf4f"/><circle cx="10" cy="296" r="1.500" stroke="#4fbf4f"/>
<path d="M11 314.500h8" stroke="#1a7a2a" stroke-width="1.600"/><circle cx="10" cy="314.500" r="1.500" stroke="#1a7a2a"/>
<path d="M11 332.500h8" stroke="#e01414" stroke-width="1.600"/><circle cx="10" cy="332.500" r="1.500" stroke="#e01414"/>
<path d="M6 354l10-10 3 3-10 10z" stroke="#778"/>
<path d="M5 376l5-6 4 3 5-6" stroke="#c88"/><path d="M5 367h14" stroke="#8aa"/><path d="M5 379h14" stroke="#7c9"/>
<ellipse cx="12" cy="387" rx="6" ry="4" stroke="#e01414" fill="#b0a0a8"/>
<ellipse cx="12" cy="405" rx="6" ry="4" stroke="#a0703c" fill="#b0a0a8"/>
<ellipse cx="12" cy="423" rx="6" ry="4" stroke="#1a8a2a" fill="#8cae9c"/>
<ellipse cx="12" cy="442" rx="6" ry="4" stroke="#22e022" fill="#a6d8b0"/>
<path d="M4 467l15-14" stroke="#222"/>
<path d="M4 486l15-14" stroke="#3ca03c" stroke-width="1.300"/>
<path d="M4 505l15-14" stroke="#e02020" stroke-width="1.300"/>
</g>
<path fill="#22d" d="M17 384h2v2h-2zM5 390h2v2H5zM17 402h2v2h-2zM5 408h2v2H5zM17 420h2v2h-2zM5 426h2v2H5zM17 439h2v2h-2zM5 445h2v2H5zM5 134h2v2H5zM16 160h2v2h-2zM6 170h2v2H6z"/>
<g stroke-width="2">
<path d="M3 516.500h16" stroke="#667"/><path d="M3 535h16" stroke="#f0a0a0"/><path d="M3 553.500h16" stroke="#22e022"/><path d="M3 572h16" stroke="#1a7a2a"/><path d="M3 590h16" stroke="#f02020"/><path d="M3 608.500h16" stroke="#7aa4f5"/><path d="M3 627h16" stroke="#1818a8"/>
<path d="M12 635v16" stroke="#667" stroke-width="1.300"/>
</g>
<g fill="none" stroke="#e86a20" stroke-width="1.200">
<path d="M5 668l9-7v7zM5 668h13" stroke="#c66"/>
<circle cx="12" cy="681" r="5"/>
</g>
<text x="15" y="668" font-size="6" fill="#22d">o</text>
<text x="4" y="699" font-size="6" font-weight="bold" fill="#22d" textLength="16">345</text>
<text x="4" y="706" font-size="6" font-weight="bold" fill="#22d" textLength="16">1 2</text>
<text x="5" y="718" font-size="6" font-weight="bold" fill="#22d" textLength="14">a b</text>
<text x="13" y="725" font-size="6" font-weight="bold" fill="#22d">c</text>
<path d="M6 736l4 5 9-10-9 6z" fill="#2eae2e" stroke="#1a8a1a"/>
<path d="M5 762v-6h3l4-6 2 1-1 5h6v6l-2 2H7z" fill="#5ab84a" stroke="#3a8a3a" stroke-width=".5"/>
<path d="M6 769l12 11M18 769L6 780" stroke="#e01414" stroke-width="3.500"/>
<rect x="0" y="789" width="23" height="9" fill="#b8ccd6"/><path d="M9 792l2.500 2 2.500-2" fill="none" stroke="#333"/>
<rect x="8" y="804" width="10" height="12" fill="#eee" stroke="#444" stroke-width=".7"/><circle cx="9" cy="805" r="3" fill="#2a8a2a"/>
<text x="6" y="838" font-size="10" font-weight="bold" fill="#333">•••</text>
<path d="M6 858l3-8 3 6 3-7" fill="none" stroke="#a44"/>

<!-- top bar -->
<rect x="0" y="0" width="1600" height="18" fill="url(#tb)"/>
<rect x="0" y="0" width="1600" height="1" fill="#5f7a86"/>
<rect x="0" y="18" width="1600" height="1.200" fill="#54707c"/>
<path d="M7 14V10h1.500v4zM11 14V7h1.500v7zM14 12V5h1.500v7z" fill="#2a9a2a"/>
<path d="M19.500 0V18M82.500 0V18M284 0V18M332 0V18M412 0V18M481 0V18M565 0V18" stroke="#8aa3af"/>
<path d="M24 5h3v3h-3zM28 5h3v3h-3zM24 10h3v3h-3zM28 10h3v3h-3z" fill="#7d8f98"/>
<g fill="#c2d8e2" stroke="#7d99a6">
<rect x="86" y="3" width="17" height="13" rx="2"/><rect x="105" y="3" width="22" height="13" rx="2"/><rect x="130" y="3" width="15" height="13" rx="2"/><rect x="148" y="3" width="20" height="13" rx="2"/><rect x="172" y="3" width="18" height="13" rx="2"/><rect x="193" y="3" width="13" height="13" rx="2"/><rect x="210" y="3" width="14" height="13" rx="2"/><rect x="228" y="3" width="9" height="13" rx="2"/><rect x="240" y="3" width="12" height="13" rx="2" fill="#8da7b3"/><rect x="255" y="3" width="12" height="13" rx="2"/><rect x="270" y="3" width="9" height="13" rx="2"/><rect x="338" y="3" width="18" height="13" rx="2"/><rect x="360" y="3" width="22" height="13" rx="2" fill="#8da7b3"/><rect x="386" y="3" width="22" height="13" rx="2"/>
</g>
<g class="l">
<text x="36" y="12.500" textLength="32" lengthAdjust="spacingAndGlyphs">XAUUSD</text>
<text x="94.500" y="12.500" text-anchor="middle">12s</text><text x="116" y="12.500" text-anchor="middle">144s</text><text x="137.500" y="12.500" text-anchor="middle">1m</text><text x="158" y="12.500" text-anchor="middle">12m</text><text x="181" y="12.500" text-anchor="middle">56m</text><text x="199.500" y="12.500" text-anchor="middle">1h</text><text x="217" y="12.500" text-anchor="middle">4h</text><text x="232.500" y="12.500" text-anchor="middle">D</text><text x="246" y="12.500" text-anchor="middle">W</text><text x="261" y="12.500" text-anchor="middle">M</text><text x="274.500" y="12.500" text-anchor="middle">Q</text>
<text x="287" y="12.500" textLength="36" lengthAdjust="spacingAndGlyphs">1 semana</text>
<text x="347" y="12.500" text-anchor="middle">5kU</text><text x="371" y="12.500" text-anchor="middle">10kU</text><text x="397" y="12.500" text-anchor="middle">35kU</text>
<text x="416" y="12.500" textLength="53" lengthAdjust="spacingAndGlyphs">10 k unidades</text>
<text x="504" y="12.500" textLength="45" lengthAdjust="spacingAndGlyphs">Indicadores</text>
<text x="632" y="12.500" textLength="44" lengthAdjust="spacingAndGlyphs">20 mar 2026</text>
</g>
<path fill="none" stroke="#334" stroke-width="1.100" d="M72 8l2.500 2.500L77 8M326 8l2.500 2.500L331 8M472 8l2.500 2.500L477 8M556 8l2.500 2.500L561 8"/>
<path d="M486 14l5-6 4 3 6-6" fill="none" stroke="#d04040"/><path d="M486 9l5 2 5-4 5 3" fill="none" stroke="#888"/><path d="M487 13h3v4h-3zM492 11h3v6h-3zM497 12h3v5h-3z" fill="#2a9a2a"/>
<rect x="572" y="5" width="7" height="9" fill="#e8f0f4" stroke="#c8d4da"/><path d="M575.500 5v9" stroke="#99a"/>
<circle cx="589" cy="9.500" r="3" fill="#888"/>
<rect x="597" y="3" width="32" height="13" rx="2" fill="#f04848"/>
<text x="613" y="12.500" font-size="9" font-weight="bold" fill="#fff" text-anchor="middle">-3,28 %</text>
<rect x="680" y="3" width="54" height="13" rx="3" fill="#c2c2e8" stroke="#a8a8d8"/>
<text x="707" y="12.500" font-size="9" fill="#2a2f48" text-anchor="middle" textLength="50" lengthAdjust="spacingAndGlyphs">Oro Cash (1E)</text>
<path d="M1547 0V18M1565 0V18" stroke="#8aa3af"/>
<path d="M1552 9a4 4 0 0 1 7-3" fill="none" stroke="#e01414" stroke-width="2"/><path d="M1561 9a4 4 0 0 1-7 4" fill="none" stroke="#1ab01a" stroke-width="2"/><path d="M1549 8h6l-3 4zM1558 10h6l-3-4z" fill="#1a1a1a"/>
<path d="M1568 12h7" stroke="#7d8f98" stroke-width="2"/><rect x="1581" y="6" width="6" height="6" fill="none" stroke="#7d8f98" stroke-width="1.200"/><path d="M1592 5l6 7M1598 5l-6 7" stroke="#7d8f98" stroke-width="1.500"/>

<!-- legend row -->
<rect x="24" y="19" width="471" height="13" fill="#c6d6dd" stroke="#8aa0ac" stroke-width=".8"/>
<rect x="0" y="19" width="23" height="9" fill="#b8ccd6"/><path d="M9 24.500l2.500-2 2.500 2" fill="none" stroke="#667"/>
<rect x="26" y="21" width="8" height="9" fill="#eee" stroke="#aab"/><path d="M27.500 25.500h5M30 23v5" stroke="#e01414" stroke-width="1.800"/>
<rect x="37" y="21" width="8" height="9" fill="#eee" stroke="#aab"/><path d="M38.500 25.500h5M41 23v5" stroke="#18a818" stroke-width="1.800"/>
<circle cx="52" cy="25" r="4" fill="#4a78a8"/><path d="M50.500 23.500l3 3M53.500 23.500l-3 3" stroke="#fff"/>
<path d="M58.500 19V32M99.500 19V32M112.500 19V32M166.500 19V32M281.500 19V32M377.500 19V32" stroke="#8aa0ac"/>
<rect x="63" y="22" width="6" height="6" fill="#e6eef2" stroke="#8a9aa2"/>
<text class="t" x="72" y="28.500" textLength="25" lengthAdjust="spacingAndGlyphs">Precio</text>
<path d="M105 22.500h5M105 25h5M105 27.500h5" stroke="#333"/><path d="M103 22.500h1M103 25h1M103 27.500h1" stroke="#333"/>
<rect x="116" y="22" width="6" height="6" fill="#e6eef2" stroke="#8a9aa2"/>
<text class="t" x="126" y="28.500" textLength="39" lengthAdjust="spacingAndGlyphs">Cierre (W)</text>
<rect x="170" y="22" width="6" height="6" fill="#78858d"/>
<text class="t" x="180" y="28.500" textLength="99" lengthAdjust="spacingAndGlyphs">Tunel Domenec v4 (t t t t t)</text>
<path d="M285 22h1.500v6H285z" fill="#222"/><path d="M287 22h1.500v6H287z" fill="#c22"/><path d="M289 22h1.500v6H289z" fill="#e8c020"/><path d="M291 22h1.500v6H291z" fill="#22c"/>
<text class="t" x="295" y="28.500" textLength="80" lengthAdjust="spacingAndGlyphs">Control Total Doc v.6</text>
<rect x="381" y="22" width="6" height="6" fill="#000"/>
<text class="t" x="390" y="28.500" textLength="103" lengthAdjust="spacingAndGlyphs">Multi Avisos (3 f 3 1,5 70 f f)</text>
</svg>
</body></html>
